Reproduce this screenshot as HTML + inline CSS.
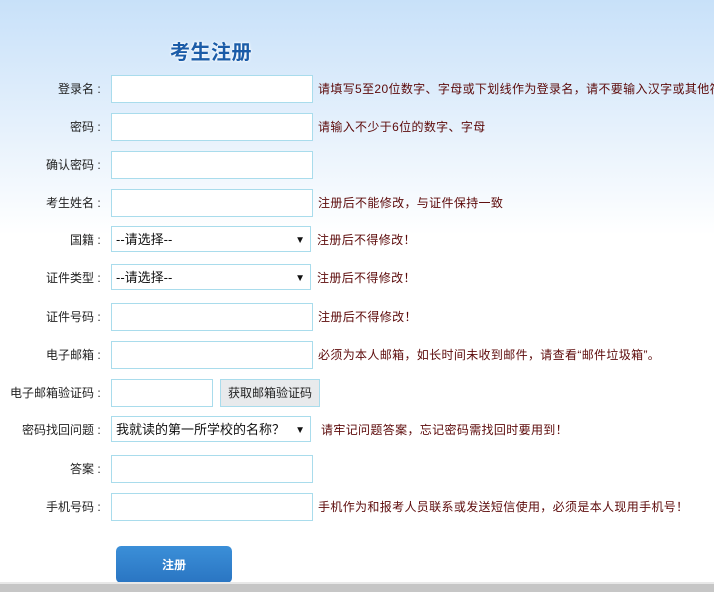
<!DOCTYPE html>
<html><head><meta charset="utf-8"><style>
*{margin:0;padding:0;box-sizing:border-box}
body{width:714px;height:592px;overflow:hidden;position:relative;font-family:"Liberation Sans","Noto Sans CJK SC",sans-serif;font-size:12px;color:#222;background:linear-gradient(#c8e1f9 0px,#e6f1fc 130px,#fff 235px,#fff 100%)}
.t{position:absolute;left:170px;top:36px;font-size:20px;font-weight:bold;color:#1b5ca8;text-shadow:0 0 2px #fff,0 0 3px #fff;letter-spacing:0.5px}
.r{position:absolute;left:0;width:714px;height:28px}
.l{position:absolute;right:610px;top:0;line-height:28px;white-space:nowrap;text-align:right}
.l i{font-style:normal;display:inline-block;width:10px;text-align:center}
.i{position:absolute;left:111px;top:0;width:202px;height:28px;border:1px solid #a9dcec;background:#fff}
.s{position:absolute;left:111px;top:0;width:200px;height:26px;border:1px solid #a9dcec;background:#fff;line-height:25px;padding-left:4px;font-size:13px;color:#111}
.s:after{content:"▼";position:absolute;right:5px;top:1px;font-size:10px}
.h{position:absolute;left:318px;top:0;line-height:28px;color:#5c0a0a;white-space:nowrap;letter-spacing:0.35px}
.b{position:absolute;left:220px;top:0;width:100px;height:28px;border:1px solid #a9dcec;background:#e8eaec;line-height:26px;text-align:center;color:#222}
.btn{position:absolute;left:116px;top:546px;width:116px;height:37px;border-radius:5px;background:linear-gradient(#3b8fd8,#2a75c2);color:#fff;font-weight:bold;text-align:center;line-height:38px}
.bar{position:absolute;left:0;top:582px;width:714px;height:10px;background:#c6c6c6;border-top:2px solid #e8e8e8}
</style></head><body>
<div class="t">考生注册</div>
<div class="r" style="top:75px"><span class="l">登录名<i>:</i></span><div class="i"></div><span class="h">请填写5至20位数字、字母或下划线作为登录名，请不要输入汉字或其他符号</span></div>
<div class="r" style="top:113px"><span class="l">密码<i>:</i></span><div class="i"></div><span class="h">请输入不少于6位的数字、字母</span></div>
<div class="r" style="top:151px"><span class="l">确认密码<i>:</i></span><div class="i"></div></div>
<div class="r" style="top:189px"><span class="l">考生姓名<i>:</i></span><div class="i"></div><span class="h">注册后不能修改，与证件保持一致</span></div>
<div class="r" style="top:226px"><span class="l">国籍<i>:</i></span><div class="s">--请选择--</div><span class="h" style="left:317px;top:0px">注册后不得修改！</span></div>
<div class="r" style="top:264px"><span class="l">证件类型<i>:</i></span><div class="s">--请选择--</div><span class="h" style="left:317px;top:0px">注册后不得修改！</span></div>
<div class="r" style="top:303px"><span class="l">证件号码<i>:</i></span><div class="i"></div><span class="h">注册后不得修改！</span></div>
<div class="r" style="top:341px"><span class="l">电子邮箱<i>:</i></span><div class="i"></div><span class="h">必须为本人邮箱，如长时间未收到邮件，请查看“邮件垃圾箱”。</span></div>
<div class="r" style="top:379px"><span class="l">电子邮箱验证码<i>:</i></span><div class="i" style="width:102px"></div><div class="b">获取邮箱验证码</div></div>
<div class="r" style="top:416px"><span class="l">密码找回问题<i>:</i></span><div class="s">我就读的第一所学校的名称？</div><span class="h" style="left:321px">请牢记问题答案，忘记密码需找回时要用到！</span></div>
<div class="r" style="top:455px"><span class="l">答案<i>:</i></span><div class="i"></div></div>
<div class="r" style="top:493px"><span class="l">手机号码<i>:</i></span><div class="i"></div><span class="h">手机作为和报考人员联系或发送短信使用，必须是本人现用手机号！</span></div>
<div class="btn">注册</div>
<div class="bar"></div>
</body></html>
